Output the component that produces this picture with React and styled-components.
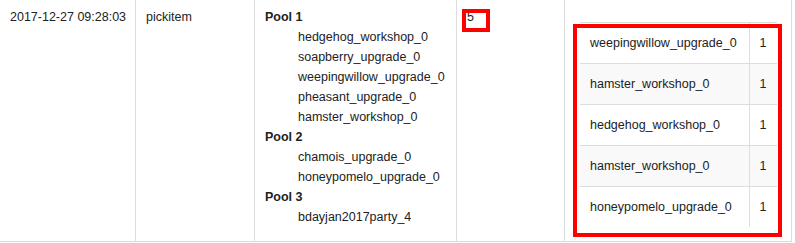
import React from "react";
import styled, { createGlobalStyle } from "styled-components";

const Global = createGlobalStyle`
  html, body { margin: 0; padding: 0; background: #fff; }
  body { font-family: "Liberation Sans", Arial, sans-serif; font-size: 12.5px; color: #222; }
`;

const LogTable = styled.table`
  border-collapse: separate;
  border-spacing: 0;
  table-layout: fixed;
  width: 792px;
`;

const Cell = styled.td`
  box-sizing: border-box;
  width: ${(p) => p.$w}px;
  vertical-align: top;
  padding: 7px 10px 8px 10px;
  line-height: 20px;
  border-right: 1px solid #ddd;
  border-bottom: 1px solid #ddd;
  position: relative;
  white-space: nowrap;
`;

const NestCell = styled(Cell)`
  padding: 22px 14px 14px 15px;
`;

const PoolName = styled.div`
  font-weight: bold;
`;

const PoolItem = styled.div`
  margin-left: 33px;
`;

const Mark = styled.div`
  position: absolute;
  left: ${(p) => p.$x}px;
  top: ${(p) => p.$y}px;
  width: ${(p) => p.$w}px;
  height: ${(p) => p.$h}px;
  box-sizing: border-box;
  border: 4px solid #ff0000;
  pointer-events: none;
`;

const InnerTable = styled.table`
  border-collapse: collapse;
  width: 197px;
  table-layout: fixed;
`;

const InnerRow = styled.tr`
  background: ${(p) => (p.$striped ? "#f9f9f9" : "#fff")};
`;

const InnerCell = styled.td`
  height: 40px;
  box-sizing: border-box;
  padding: 10px 10px;
  line-height: 20px;
  border-top: 1px solid #ddd;
  white-space: nowrap;
  vertical-align: top;
  width: ${(p) => (p.$count ? "28px" : "auto")};
  border-left: ${(p) => (p.$count ? "1px solid #ddd" : "none")};
`;

const pools = [
  {
    name: "Pool 1",
    items: [
      "hedgehog_workshop_0",
      "soapberry_upgrade_0",
      "weepingwillow_upgrade_0",
      "pheasant_upgrade_0",
      "hamster_workshop_0",
    ],
  },
  { name: "Pool 2", items: ["chamois_upgrade_0", "honeypomelo_upgrade_0"] },
  { name: "Pool 3", items: ["bdayjan2017party_4"] },
];

const picked = [
  "weepingwillow_upgrade_0",
  "hamster_workshop_0",
  "hedgehog_workshop_0",
  "hamster_workshop_0",
  "honeypomelo_upgrade_0",
];

export default function App() {
  return (
    <>
      <Global />
      <LogTable>
        <tbody>
          <tr>
            <Cell $w={136}>2017-12-27 09:28:03</Cell>
            <Cell $w={119}>pickitem</Cell>
            <Cell $w={202}>
              {pools.map((p) => (
                <React.Fragment key={p.name}>
                  <PoolName>{p.name}</PoolName>
                  {p.items.map((it) => (
                    <PoolItem key={it}>{it}</PoolItem>
                  ))}
                </React.Fragment>
              ))}
            </Cell>
            <Cell $w={108}>
              5
              <Mark $x={5} $y={9} $w={28} $h={23} />
            </Cell>
            <NestCell $w={227}>
              <InnerTable>
                <tbody>
                  {picked.map((name, i) => (
                    <InnerRow key={i} $striped={i % 2 === 1}>
                      <InnerCell>{name}</InnerCell>
                      <InnerCell $count>1</InnerCell>
                    </InnerRow>
                  ))}
                </tbody>
              </InnerTable>
              <Mark $x={8} $y={24} $w={209} $h={213} />
            </NestCell>
          </tr>
        </tbody>
      </LogTable>
    </>
  );
}
